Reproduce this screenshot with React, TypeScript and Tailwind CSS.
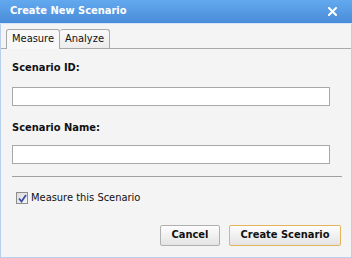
import React from "react";

const font = { fontFamily: "'DejaVu Sans Condensed', 'DejaVu Sans', sans-serif" };

export default function App() {
  return (
    <div
      className="w-[352px] h-[258px] flex flex-col bg-[#f4f4f4] border-x border-b border-[#b9d0ec] text-[11px] text-[#111]"
      style={font}
    >
      {/* Title bar */}
      <div className="h-[24px] -mx-px flex items-center justify-between pl-[10px] pr-[15px] bg-gradient-to-b from-[#62a9ef] to-[#4b8cd8] border-b border-[#d4e3f5]">
        <span className="text-white font-bold text-[11px]">Create New Scenario</span>
        <svg width="9" height="9" viewBox="0 0 9 9">
          <path d="M1 1L8 8M8 1L1 8" stroke="white" strokeWidth="2" strokeLinecap="square" />
        </svg>
      </div>

      {/* Tabs */}
      <div className="mt-[4px] px-[5px] flex items-end border-b border-[#aaaaaa] h-[21px]">
        <div className="h-[20px] w-[54px] flex items-center pl-[5px] bg-[#f8f8f8] border border-b-0 border-[#aaaaaa] rounded-t-[3px] -mb-px pb-px">
          Measure
        </div>
        <div className="h-[19px] w-[50px] flex items-center pl-[5px] bg-gradient-to-b from-[#fafafa] to-[#ececec] border border-b-0 border-l-0 border-[#aaaaaa] rounded-t-[3px]">
          Analyze
        </div>
      </div>

      {/* Form */}
      <div className="flex flex-col px-[11px] pt-[12px]">
        <label className="font-bold h-[14px] leading-[14px]">Scenario ID:</label>
        <input className="mt-[12px] w-[318px] h-[19px] bg-white border border-[#a8a8a8] outline-none" />
        <label className="mt-[15px] font-bold h-[14px] leading-[14px]">Scenario Name:</label>
        <input className="mt-[10px] w-[318px] h-[19px] bg-white border border-[#a8a8a8] outline-none" />
        <div className="mt-[12px] w-[330px] h-px bg-[#a0a0a0]" />
        <label className="mt-[13px] flex items-center gap-[3px] ml-[4px]">
          <span className="w-[12px] h-[12px] border border-[#8e8e8e] bg-gradient-to-br from-[#dcdcdc] to-[#f6f6f6] flex items-center justify-center">
            <svg width="9" height="9" viewBox="0 0 9 9">
              <path d="M1 4.5L3.5 7.5L8 1" stroke="#3b4fa8" strokeWidth="1.8" fill="none" />
            </svg>
          </span>
          <span>Measure this Scenario</span>
        </label>
      </div>

      {/* Buttons */}
      <div className="mt-[18px] flex justify-end gap-[9px] pr-[10px]">
        <button className="w-[60px] h-[21px] font-bold bg-gradient-to-b from-[#fdfdfd] to-[#e4e4e4] border border-[#b0b0b0] rounded-[2px]">
          Cancel
        </button>
        <button className="w-[112px] h-[21px] font-bold bg-gradient-to-b from-[#fdfdfd] to-[#e4e4e4] border border-[#e4b45c] rounded-[2px]">
          Create Scenario
        </button>
      </div>
    </div>
  );
}
